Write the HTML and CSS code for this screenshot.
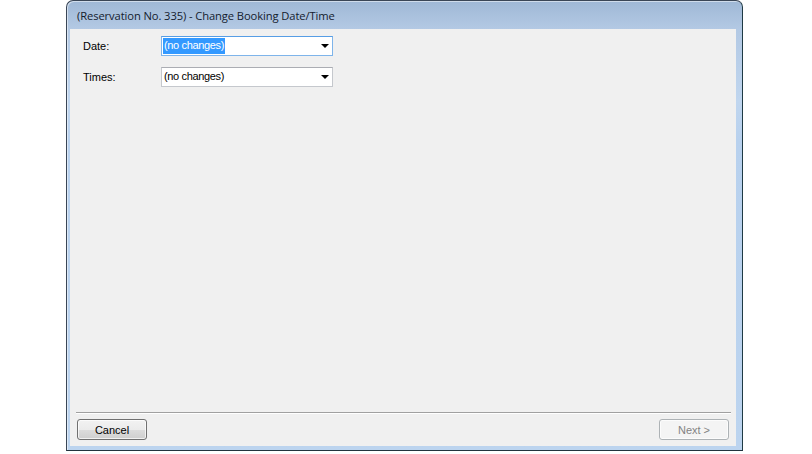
FILE: index.html
```html
<!DOCTYPE html>
<html>
<head>
<meta charset="utf-8">
<link rel="stylesheet" href="styles.css">
</head>
<body>
<div class="window">
  <div class="titlebar">(Reservation No. 335) - Change Booking Date/Time</div>
  <div class="client">
    <div class="form">
      <div class="row">
        <span class="label">Date:</span>
        <div class="combo focused"><span class="value selected">(no changes)</span><span class="arrow"></span></div>
      </div>
      <div class="row">
        <span class="label">Times:</span>
        <div class="combo"><span class="value">(no changes)</span><span class="arrow"></span></div>
      </div>
    </div>
    <div class="footer">
      <div class="separator"></div>
      <div class="buttons">
        <button class="btn">Cancel</button>
        <button class="btn disabled">Next &gt;</button>
      </div>
    </div>
  </div>
</div>
</body>
</html>
```

FILE: styles.css
```css
html, body {
  margin: 0;
  padding: 0;
  background: #ffffff;
}
body {
  width: 812px;
  height: 454px;
  overflow: hidden;
}
.window {
  margin-left: 66px;
  width: 677px;
  height: 451px;
  box-sizing: border-box;
  border: 1px solid #3a4656;
  border-right-color: #1f3a44;
  border-bottom-color: #22333d;
  border-radius: 7px 7px 0 0;
  background: linear-gradient(180deg, #9fb8d6 0px, #b3c9e4 28px, #c0d6ef 100px, #b8d1ee 140px, #bcd4ef 100%);
  display: flex;
  flex-direction: column;
  padding: 0 6px 4px 3px;
  box-shadow: inset 1px 1px 0 rgba(255,255,255,0.5);
}
.titlebar {
  height: 28px;
  flex: none;
  display: flex;
  align-items: center;
  padding-left: 7px;
  padding-top: 1px;
  box-sizing: border-box;
  font-family: "Open Sans", "Noto Sans", sans-serif;
  font-size: 11.2px;
  color: #14202e;
  letter-spacing: -0.1px;
}
.client {
  flex: 1;
  background: #f0f0f0;
  display: flex;
  flex-direction: column;
  justify-content: space-between;
  font-family: "Liberation Sans", Arial, sans-serif;
  font-size: 11px;
  color: #000;
}
.form {
  padding: 7px 0 0 13px;
  display: flex;
  flex-direction: column;
  gap: 11px;
}
.row {
  display: flex;
  align-items: center;
  height: 20px;
}
.label {
  width: 78px;
}
.combo {
  width: 172px;
  height: 20px;
  box-sizing: border-box;
  border: 1px solid #c5c8cd;
  border-top-color: #abadb3;
  background: #ffffff;
  display: flex;
  align-items: center;
  justify-content: space-between;
  padding: 0 3px 0 1px;
}
.combo.focused {
  border-color: #7eb4ea;
  border-top-color: #569de5;
}
.value {
  padding: 1px 1px 2px 1px;
  line-height: 13px;
  letter-spacing: -0.35px;
}
.value.selected {
  background: #3399ff;
  color: #ffffff;
}
.arrow {
  width: 0;
  height: 0;
  border-left: 4px solid transparent;
  border-right: 4px solid transparent;
  border-top: 4px solid #000;
}
.footer {
  padding: 0 5px 6px 6px;
}
.separator {
  height: 0;
  border-top: 1px solid #a0a0a0;
  border-bottom: 1px solid #ffffff;
}
.buttons {
  margin-top: 5px;
  display: flex;
  justify-content: space-between;
  padding: 0 2px 0 1px;
}
.btn {
  width: 70px;
  height: 21px;
  box-sizing: border-box;
  border: 1px solid #707070;
  border-radius: 3px;
  background: linear-gradient(180deg, #f2f2f2 0%, #ebebeb 50%, #dddddd 51%, #cfcfcf 100%);
  box-shadow: inset 0 0 0 1px rgba(255,255,255,0.7);
  font-family: "Liberation Sans", Arial, sans-serif;
  font-size: 11px;
  color: #000;
  padding: 0;
}
.btn.disabled {
  border-color: #adb2b5;
  background: #f4f4f4;
  color: #838383;
}
```
